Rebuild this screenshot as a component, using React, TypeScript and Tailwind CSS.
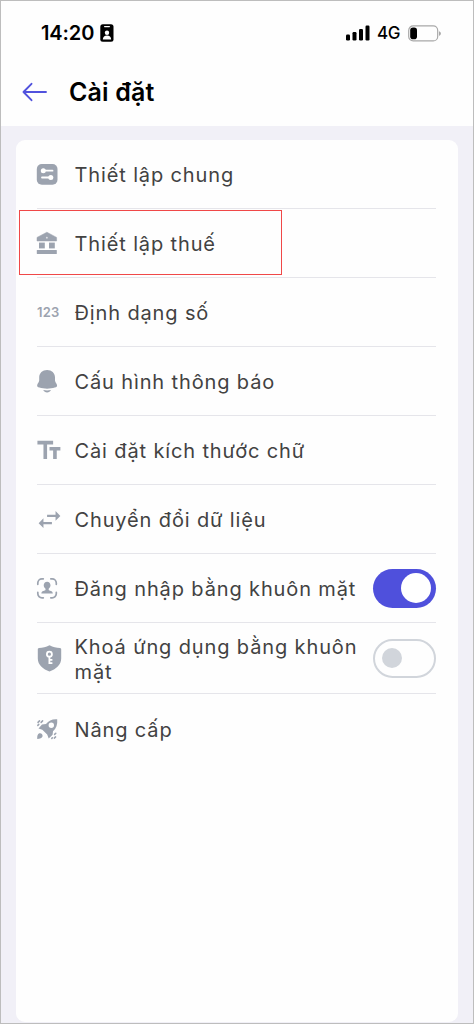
import { useState, type ReactNode } from "react";
import clsx from "clsx";
import { MdFormatSize, MdSwapHoriz } from "react-icons/md";

function GeneralIcon() {
  return (
    <svg width="26" height="28" viewBox="0 0 26 28" fill="currentColor">
      <rect x="0.8" y="4" width="20.7" height="20.7" rx="5" />
      <g stroke="#fff" strokeWidth="1.8" strokeLinecap="round">
        <path d="M7.5 10.7h9M6 17.5h8.5" />
      </g>
      <circle cx="7.3" cy="10.7" r="2.5" fill="#fff" />
      <circle cx="14.8" cy="17.5" r="2.5" fill="#fff" />
    </svg>
  );
}

function TaxIcon() {
  return (
    <svg width="26" height="28" viewBox="0 0 26 28" fill="currentColor">
      <path
        fillRule="evenodd"
        d="M10.9 3.2 20.6 8.4V12H1V8.4ZM10.9 7.8a1 1 0 1 0 0 2 1 1 0 0 0 0-2Z"
        stroke="currentColor"
        strokeWidth="0.5"
        strokeLinejoin="round"
      />
      <rect x="3" y="13.6" width="5.8" height="5.8" />
      <rect x="13" y="13.6" width="5.8" height="5.8" />
      <rect x="0.8" y="21" width="20" height="4" rx="0.5" />
    </svg>
  );
}

function BellIcon() {
  return (
    <svg width="26" height="28" viewBox="0 0 26 28" fill="currentColor">
      <path d="M11.1 3c-4.6 0-7.9 3.1-7.900 7.300v3.200c0 1.500-1.600 2.800-2 4.400-.3 1.500.5 2.100 2.200 2.700 4.600 1.500 10.800 1.500 15.400 0 1.700-.6 2.500-1.200 2.200-2.700-.4-1.600-2-2.900-2-4.400v-3.200C19 6.100 15.700 3 11.100 3Z" />
      <path d="M7.200 23c2.500.5 5.300.5 7.800 0-.8 1.500-2.100 2.400-3.900 2.400S8 24.500 7.200 23Z" />
    </svg>
  );
}

function FaceIcon() {
  return (
    <svg width="26" height="28" viewBox="0 0 26 28" fill="currentColor">
      <path
        d="M1.8 10.300V9a4.200 4.200 0 0 1 4.200-4.200h1.300M14.800 4.800h1.300A4.200 4.200 0 0 1 20.300 9v1.300M20.300 18.300v1.300a4.200 4.200 0 0 1-4.200 4.200h-1.300M7.300 23.800H6a4.200 4.200 0 0 1-4.200-4.200v-1.300"
        fill="none"
        stroke="currentColor"
        strokeWidth="1.7"
        strokeLinecap="round"
      />
      <path d="M11.100 7.700c-2 0-3.400 1.500-3.400 3.600 0 1.500.8 2.800 1.800 3.500v1.300c-.3.700-4.100.8-4.100 3.300h11.400c0-2.500-3.800-2.600-4.100-3.300v-1.300c1-.7 1.800-2 1.800-3.500 0-2.100-1.400-3.600-3.400-3.600Z" />
    </svg>
  );
}

function ShieldIcon() {
  return (
    <svg width="26" height="28" viewBox="0 0 26 28" fill="currentColor">
      <path d="M13.5 1.200c3.500 1.800 6.800 2.500 10.500 2.700.8.100 1.200.5 1.200 1.300v9.200c0 6.500-5.300 10.600-11.700 13.100C7.100 25 1.800 20.900 1.800 14.400V5.200c0-.8.4-1.200 1.200-1.300 3.700-.2 7-.9 10.500-2.700Z" />
      <g fill="none" stroke="#fff" strokeWidth="1.800">
        <circle cx="13.400" cy="10.200" r="2.500" />
        <path d="M13.400 12.700v7.300M13.400 15.800h3M13.400 19.100h3" />
      </g>
    </svg>
  );
}

function RocketIcon() {
  return (
    <svg width="26" height="28" viewBox="0 0 26 28" fill="currentColor">
      <path
        fillRule="evenodd"
        d="M21.200 4.300c.5 5.300-1 9.100-4.200 12l-.4 3.500-3.900 3.600-1.500-3.800-4.900-4.900-3.800-1.300 3.500-4 4-.5c2.800-3.300 6.200-5 11.200-4.600ZM15.300 7.500a2.700 2.700 0 1 0 0 5.400 2.700 2.700 0 0 0 0-5.400Z"
      />
      <path d="M1.200 23.900c-.1-2.900.4-4.900 2.100-5.600 1.800-.7 3.800 1.200 3.200 3.100-.5 1.700-2.500 2.400-5.300 2.500Z" />
      <path
        d="M2 7.400 3.500 5.900M5.100 7.400 6.600 5.900M1.800 10.400l1-1M18.600 19.400l1.200-1.200M18.300 23.100l1.300-1.200M15.800 23.400l.6-.6"
        fill="none"
        stroke="currentColor"
        strokeWidth="1.500"
        strokeLinecap="round"
      />
    </svg>
  );
}

interface ToggleProps {
  checked: boolean;
  onChange: () => void;
}

function Toggle({ checked, onChange }: ToggleProps) {
  return (
    <button
      role="switch"
      aria-checked={checked}
      onClick={onChange}
      className={clsx(
        "mr-[0.5px] flex h-[39px] w-[63px] shrink-0 items-center rounded-full",
        checked ? "justify-end bg-[#4f50dc] pr-[5px]" : "justify-start border-2 border-[#d1d5db] pl-[7.5px]"
      )}
    >
      <span className={clsx("rounded-full", checked ? "size-[29.5px] bg-white" : "size-[19.5px] bg-[#d1d5db]")} />
    </button>
  );
}

function StatusBar() {
  return (
    <div className="flex h-[64px] items-center justify-between pr-[32px] pl-[40px] text-black">
      <div className="flex items-center gap-[6px]">
        <span className="text-[20px] leading-none font-semibold tracking-[-0.1px]">14:20</span>
        <svg width="14" height="18" viewBox="0 0 14 18">
          <rect x="0.3" y="0.3" width="13.2" height="17.4" rx="2.5" />
          <rect x="4" y="2" width="6" height="1.2" rx="0.6" fill="#fff" />
          <circle cx="7" cy="8.7" r="2.2" fill="#fff" />
          <path d="M2.8 15.500c.2-2.600 1.700-4 4.200-4s4 1.400 4.200 4Z" fill="#fff" />
        </svg>
      </div>
      <div className="flex items-center">
        <svg width="24" height="16" viewBox="0 0 24 16">
          <rect x="0" y="9.5" width="4" height="6" rx="1.2" />
          <rect x="6.5" y="7" width="4" height="8.5" rx="1.2" />
          <rect x="13" y="4" width="4" height="11.5" rx="1.2" />
          <rect x="19.5" y="0.5" width="4" height="15" rx="1.2" />
        </svg>
        <span className="ml-[7px] w-[31px] text-[17px] leading-none font-medium tracking-[-0.3px]">4G</span>
        <svg width="33" height="17" viewBox="0 0 33 17">
          <rect x="0.7" y="0.9" width="29" height="15" rx="4.5" fill="none" stroke="#a8a8a8" strokeWidth="1.2" />
          <rect x="2.2" y="2.600" width="6.8" height="11.6" rx="2.8" />
          <path d="M31 6.200c1.300.4 1.900 1.300 1.900 2.300s-.6 1.900-1.900 2.300Z" fill="#a8a8a8" />
        </svg>
      </div>
    </div>
  );
}

interface RowProps {
  icon: ReactNode;
  label: string;
  tall?: boolean;
  last?: boolean;
  highlighted?: boolean;
  children?: ReactNode;
}

function SettingRow({ icon, label, tall, last, highlighted, children }: RowProps) {
  return (
    <li
      className={clsx(
        "relative flex items-center",
        tall ? "h-[71px]" : "h-[69px]",
        !last && "border-b border-[#e5e5ea]"
      )}
    >
      <span className="-ml-px flex h-7 w-[26px] shrink-0 items-center text-[#9ca3af]">{icon}</span>
      <span className="ml-[12.5px] flex-1 pt-[3px] text-[20px] leading-[25px] tracking-[0.87px] text-[#424242]">
        {label}
      </span>
      {children}
      {/* Red frame around the highlighted entry */}
      {highlighted && (
        <span className="pointer-events-none absolute top-px -left-[18px] h-[65px] w-[263px] border border-[#f04848]" />
      )}
    </li>
  );
}

export default function App() {
  const [faceLogin, setFaceLogin] = useState(true);
  const [faceLock, setFaceLock] = useState(false);

  return (
    <div
      className="flex h-[1024px] w-[474px] flex-col overflow-hidden border border-[#bdbdbd] bg-[#f1f0f7]"
      style={{ fontFamily: 'Inter, "Noto Sans", sans-serif' }}
    >
      <header className="h-[125px] shrink-0 bg-[#fefefe]">
        <StatusBar />
        <div className="flex h-[54px] items-center pl-[21px]">
          <svg
            width="26"
            height="20"
            viewBox="0 0 26 20"
            fill="none"
            stroke="#5152dd"
            strokeWidth="1.9"
            strokeLinecap="round"
            strokeLinejoin="round"
          >
            <path d="M24 10H1.500M9.500 1.800 1.500 10l8 8.200" />
          </svg>
          <h1 className="ml-[21px] pt-px text-[25px] leading-none font-semibold tracking-[0.15px] text-black">
            Cài đặt
          </h1>
        </div>
      </header>

      <main className="mx-[15px] mt-[14px] h-[882px] shrink-0 rounded-[9px] bg-[#fefefe]">
        <ul className="mr-[22px] ml-[21px]">
          <SettingRow icon={<GeneralIcon />} label="Thiết lập chung" />
          <SettingRow icon={<TaxIcon />} label="Thiết lập thuế" highlighted />
          <SettingRow
            icon={<span className="ml-px text-[13px] leading-none font-semibold tracking-[0.2px]">123</span>}
            label="Định dạng số"
          />
          <SettingRow icon={<BellIcon />} label="Cấu hình thông báo" />
          <SettingRow
            icon={<MdFormatSize className="-ml-px size-[29px] shrink-0 -scale-x-100" />}
            label="Cài đặt kích thước chữ"
          />
          <SettingRow icon={<MdSwapHoriz className="-ml-px size-[29px] shrink-0" />} label="Chuyển đổi dữ liệu" />
          <SettingRow icon={<FaceIcon />} label="Đăng nhập bằng khuôn mặt">
            <Toggle checked={faceLogin} onChange={() => setFaceLogin(!faceLogin)} />
          </SettingRow>
          <SettingRow icon={<ShieldIcon />} label="Khoá ứng dụng bằng khuôn mặt" tall>
            <Toggle checked={faceLock} onChange={() => setFaceLock(!faceLock)} />
          </SettingRow>
          <SettingRow icon={<RocketIcon />} label="Nâng cấp" last />
        </ul>
      </main>
    </div>
  );
}
